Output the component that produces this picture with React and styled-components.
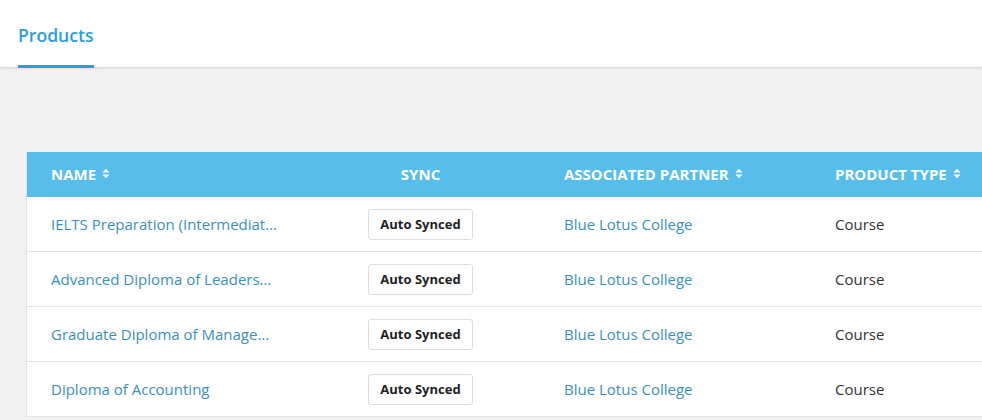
import React from "react";
import styled, { createGlobalStyle } from "styled-components";

const Global = createGlobalStyle`
  html, body { margin: 0; padding: 0; background: #f1f1f1; }
  body { font-family: "Open Sans", "Noto Sans", Arial, sans-serif; overflow: hidden; }
  * { box-sizing: border-box; }
`;

const Page = styled.div`
  width: 982px;
  height: 420px;
  overflow: hidden;
  background: #f1f1f1;
`;

const TopBar = styled.div`
  height: 68px;
  background: #ffffff;
  border-bottom: 1px solid #dcdcdc;
  box-shadow: 0 1px 2px rgba(0, 0, 0, 0.06);
  display: flex;
  align-items: flex-end;
  padding-left: 18px;
`;

const Tab = styled.div`
  height: 100%;
  display: flex;
  align-items: center;
  padding-top: 6px;
  color: #2a9fd8;
  font-size: 17.6px;
  font-weight: 600;
  border-bottom: 3px solid #2a9fd8;
  margin-bottom: -1px;
  line-height: 1;
`;

const Content = styled.div`
  padding: 84px 0 0 26px;
`;

const Table = styled.div`
  width: 1000px;
  background: #ffffff;
  border-left: 1px solid #e3e3e3;
`;

const Row = styled.div`
  display: grid;
  grid-template-columns: 274px 239px 271px 1fr;
  align-items: center;
  height: ${(p) => (p.$head ? "45px" : "55px")};
  background: ${(p) => (p.$head ? "#57bdea" : "#ffffff")};
  border-bottom: ${(p) => (p.$head ? "none" : "1px solid #e4e4e4")};
`;

const HeadCell = styled.div`
  color: #ffffff;
  font-size: 15px;
  font-weight: 700;
  text-transform: uppercase;
  padding: 0 ${(p) => (p.$center ? "0" : "24px")};
  display: flex;
  align-items: center;
  justify-content: ${(p) => (p.$center ? "center" : "flex-start")};
  gap: 6px;
  white-space: nowrap;
  transform: translateY(-1px);
`;

const Cell = styled.div`
  padding: 0 24px;
  font-size: 15px;
  color: ${(p) => (p.$link ? "#3a8fc2" : "#333333")};
  white-space: nowrap;
  overflow: hidden;
  text-overflow: ellipsis;
  display: ${(p) => (p.$center ? "flex" : "block")};
  justify-content: center;
`;

const Badge = styled.span`
  display: inline-flex;
  align-items: center;
  height: 31px;
  padding: 0 11px;
  border: 1px solid #dddddd;
  border-radius: 3px;
  background: #ffffff;
  color: #222222;
  font-size: 13px;
  font-weight: 700;
`;

const SortIcon = () => (
  <svg width="8" height="11" viewBox="0 0 8 11" aria-hidden="true">
    <path d="M0.5 4.5 L4 0.8 L7.5 4.5 Z" fill="#ffffff" />
    <path d="M0.5 6.5 L4 10.2 L7.5 6.5 Z" fill="#ffffff" />
  </svg>
);

const rows = [
  "IELTS Preparation (Intermediate Level)",
  "Advanced Diploma of Leadership and Management",
  "Graduate Diploma of Management (Learning)",
  "Diploma of Accounting",
];

export default function App() {
  return (
    <Page>
      <Global />
      <TopBar>
        <Tab>Products</Tab>
      </TopBar>
      <Content>
        <Table>
          <Row $head>
            <HeadCell>
              Name <SortIcon />
            </HeadCell>
            <HeadCell $center>Sync</HeadCell>
            <HeadCell>
              Associated Partner <SortIcon />
            </HeadCell>
            <HeadCell>
              Product Type <SortIcon />
            </HeadCell>
          </Row>
          {rows.map((r) => (
            <Row key={r}>
              <Cell $link>{r}</Cell>
              <Cell $center>
                <Badge>Auto Synced</Badge>
              </Cell>
              <Cell $link>Blue Lotus College</Cell>
              <Cell>Course</Cell>
            </Row>
          ))}
        </Table>
      </Content>
    </Page>
  );
}
